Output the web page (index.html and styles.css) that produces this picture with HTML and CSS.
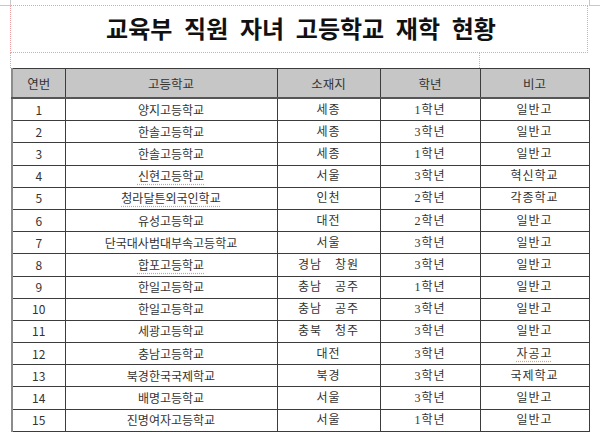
FILE: index.html
```html
<!DOCTYPE html>
<html lang="ko">
<head>
<meta charset="utf-8">
<title>교육부 직원 자녀 고등학교 재학 현황</title>
<link rel="stylesheet" href="styles.css">
</head>
<body>
<div class="corner corner-left"></div>
<div class="corner corner-right"></div>
<div class="sheet">
  <div class="titlebox">
    <h1 class="title">교육부 직원 자녀 고등학교 재학 현황</h1>
  </div>
  <div class="gap"><div class="gap-guide"></div></div>
  <table class="grid">
    <colgroup>
      <col class="c1"><col class="c2"><col class="c3"><col class="c4"><col class="c5">
    </colgroup>
    <thead>
      <tr><th>연번</th><th>고등학교</th><th>소재지</th><th>학년</th><th>비고</th></tr>
    </thead>
    <tbody>
      <tr><td class="num">1</td><td class="school">양지고등학교</td><td class="ser">세종</td><td class="ser">1학년</td><td class="ser">일반고</td></tr>
      <tr><td class="num">2</td><td class="school">한솔고등학교</td><td class="ser">세종</td><td class="ser">3학년</td><td class="ser">일반고</td></tr>
      <tr><td class="num">3</td><td class="school">한솔고등학교</td><td class="ser">세종</td><td class="ser">1학년</td><td class="ser">일반고</td></tr>
      <tr><td class="num">4</td><td class="school"><span class="spell">신현고등학교</span></td><td class="ser">서울</td><td class="ser">3학년</td><td class="ser">혁신학교</td></tr>
      <tr><td class="num">5</td><td class="school"><span class="spell">청라달튼외국인학교</span></td><td class="ser">인천</td><td class="ser">2학년</td><td class="ser">각종학교</td></tr>
      <tr><td class="num">6</td><td class="school">유성고등학교</td><td class="ser">대전</td><td class="ser">2학년</td><td class="ser">일반고</td></tr>
      <tr><td class="num">7</td><td class="school">단국대사범대부속고등학교</td><td class="ser">서울</td><td class="ser">3학년</td><td class="ser">일반고</td></tr>
      <tr><td class="num">8</td><td class="school"><span class="spell">합포고등학교</span></td><td class="ser wide">경남 창원</td><td class="ser">3학년</td><td class="ser">일반고</td></tr>
      <tr><td class="num">9</td><td class="school">한일고등학교</td><td class="ser wide">충남 공주</td><td class="ser">1학년</td><td class="ser">일반고</td></tr>
      <tr><td class="num">10</td><td class="school">한일고등학교</td><td class="ser wide">충남 공주</td><td class="ser">3학년</td><td class="ser">일반고</td></tr>
      <tr><td class="num">11</td><td class="school">세광고등학교</td><td class="ser wide">충북 청주</td><td class="ser">3학년</td><td class="ser">일반고</td></tr>
      <tr><td class="num">12</td><td class="school">충남고등학교</td><td class="ser">대전</td><td class="ser">3학년</td><td class="ser"><span class="spell">자공고</span></td></tr>
      <tr><td class="num">13</td><td class="school">북경한국국제학교</td><td class="ser">북경</td><td class="ser">3학년</td><td class="ser">국제학교</td></tr>
      <tr><td class="num">14</td><td class="school">배명고등학교</td><td class="ser">서울</td><td class="ser">3학년</td><td class="ser">일반고</td></tr>
      <tr><td class="num">15</td><td class="school">진명여자고등학교</td><td class="ser">서울</td><td class="ser">1학년</td><td class="ser">일반고</td></tr>
    </tbody>
  </table>
</div>
</body>
</html>
```
FILE: styles.css
```css
html, body {
  margin: 0;
  padding: 0;
  background: #ffffff;
}
body {
  width: 600px;
  height: 433px;
  overflow: hidden;
  position: relative;
  padding-top: 5px;
  box-sizing: border-box;
  font-family: "Noto Sans CJK KR", "Noto Sans", sans-serif;
  color: #2a2a2a;
}
.corner {
  position: absolute;
  top: 0;
  width: 10px;
  height: 5px;
  border-color: #c8c8c8;
  border-style: solid;
}
.corner-left {
  left: 0;
  border-width: 0 1px 1px 0;
}
.corner-right {
  right: 0;
  width: 10px;
  border-width: 0 0 1px 1px;
}
.sheet {
  margin-left: 10px;
  width: 578px;
}
.titlebox {
  height: 46px;
  border: 1px dotted #f0a0a0;
  display: flex;
  align-items: center;
  justify-content: center;
}
.title {
  margin: 0;
  font-family: "Noto Sans CJK KR", sans-serif;
  font-weight: 700;
  font-size: 24px;
  letter-spacing: 0;
  word-spacing: 5px;
  color: #111;
  line-height: 1;
  padding-left: 4px;
  padding-bottom: 3px;
}
.gap {
  height: 15px;
  border-left: 1px dotted #f0a0a0;
  display: flex;
}
.gap-guide {
  width: 468px;
  border-right: 1px dotted #f0a0a0;
}
.grid {
  margin-left: 1px;
  width: 577px;
  border-collapse: collapse;
  table-layout: fixed;
  font-size: 12px;
}
.c1 { width: 53px; }
.c2 { width: 212px; }
.c3 { width: 103px; }
.c4 { width: 100px; }
.c5 { width: 109px; }
.grid th, .grid td {
  border: 1px solid #3c3c3c;
  text-align: center;
  padding: 0;
  white-space: nowrap;
}
.grid th {
  background: #c6c6c6;
  height: 28px;
  font-weight: 400;
  font-size: 12.5px;
  color: #333;
  border-bottom: 2px solid #555;
}
.grid th:first-child, .grid td:first-child {
  border-left: 2px solid #8c8c8c;
}
.grid td {
  height: 21.2px;
  line-height: 14px;
}
.num {
  font-family: "Noto Sans CJK KR", sans-serif;
  color: #333;
}
.school {
  font-family: "Noto Sans CJK KR", sans-serif;
  color: #333;
}
.ser {
  font-family: "Liberation Serif", "Noto Sans CJK KR", serif;
  font-size: 12px;
  color: #333;
  letter-spacing: 1px;
}
.wide {
  word-spacing: 9px;
}
.spell {
  text-decoration: underline dotted #e89a70;
  text-underline-offset: 3px;
}
```
